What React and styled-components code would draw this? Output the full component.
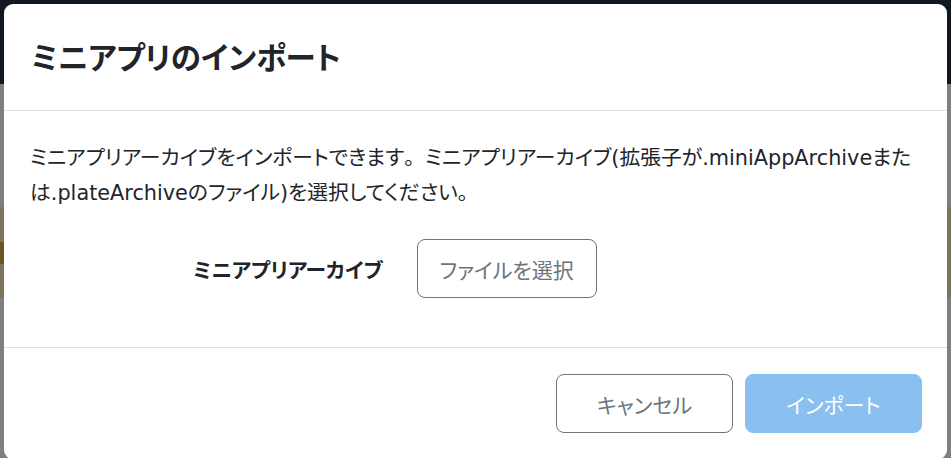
import React from "react";
import styled, { createGlobalStyle } from "styled-components";

const GlobalStyle = createGlobalStyle`
  html, body { margin: 0; padding: 0; }
  body {
    width: 951px;
    height: 458px;
    overflow: hidden;
    background: #7f7f7f;
    font-family: "DejaVu Sans", "Noto Sans CJK JP", sans-serif;
  }
`;

const Page = styled.div`
  position: relative;
  width: 951px;
  height: 458px;
  overflow: hidden;
  display: flex;
  flex-direction: column;
`;

const NavBar = styled.div`
  height: 84px;
  background: #111820;
`;

const PageBody = styled.div`
  flex: 1;
  background: #7f7f7f;
  padding-top: 123px;
`;

const Alert = styled.div`
  height: 91px;
  background: #7d7560;
  display: flex;
  align-items: center;
`;

const AlertMark = styled.div`
  width: 5px;
  height: 22px;
  background: #6b5420;
`;

const Modal = styled.div`
  position: absolute;
  left: 4px;
  top: 4px;
  width: 943px;
  height: 455px;
  background: #fff;
  border-radius: 9px;
  display: flex;
  flex-direction: column;
  color: #212529;
  font-family: "DejaVu Sans", "Noto Sans CJK JP", sans-serif;
  font-feature-settings: "palt";
`;

const Header = styled.div`
  height: 106px;
  padding: 0 27px;
  display: flex;
  align-items: center;
  border-bottom: 1px solid #dee2e6;
`;

const Title = styled.h4`
  margin: 0;
  font-family: "Noto Sans CJK JP", sans-serif;
  font-size: 30.5px;
  font-weight: 700;
  line-height: 1.2;
  padding-bottom: 2px;
`;

const Body = styled.div`
  height: 237px;
  box-sizing: border-box;
  padding: 30px 26px 0;
  border-bottom: 1px solid #dee2e6;
`;

const Description = styled.p`
  margin: 0;
  font-size: 20.8px;
  line-height: 35px;
`;

const Line = styled.span`
  display: block;
  white-space: nowrap;
`;

const Stop = styled.span`
  font-feature-settings: normal;
`;

const FieldRow = styled.div`
  margin-top: 28px;
  padding-left: 163px;
  display: flex;
  align-items: center;
  gap: 34px;
`;

const Label = styled.label`
  font-family: "Noto Sans CJK JP", sans-serif;
  font-size: 20.7px;
  font-weight: 700;
  white-space: nowrap;
`;

const Button = styled.button`
  box-sizing: border-box;
  height: 59px;
  width: ${(p) => p.$w}px;
  border-radius: 8px;
  font-family: "Noto Sans CJK JP", sans-serif;
  font-feature-settings: "palt";
  font-size: 21px;
  display: flex;
  align-items: center;
  justify-content: center;
  padding: 0;
  cursor: pointer;
  border: 1px solid ${(p) => (p.$primary ? "#8ac0f0" : "#6c757d")};
  background: ${(p) => (p.$primary ? "#8ac0f0" : "#fff")};
  color: ${(p) => (p.$primary ? "#fff" : "#6c757d")};
`;

const Footer = styled.div`
  flex: 1;
  display: flex;
  justify-content: flex-end;
  align-items: flex-start;
  gap: 12px;
  padding: 26px 25px 0;
`;

export default function App() {
  return (
    <>
      <GlobalStyle />
      <Page>
        <NavBar />
        <PageBody>
          <Alert>
            <AlertMark />
          </Alert>
        </PageBody>
        <Modal role="dialog">
          <Header>
            <Title>ミニアプリのインポート</Title>
          </Header>
          <Body>
            <Description>
              <Line>
                ミニアプリアーカイブをインポートできます<Stop>。</Stop>ミニアプリアーカイブ(拡張子が.miniAppArchiveまた
              </Line>
              <Line>
                は.plateArchiveのファイル)を選択してください<Stop>。</Stop>
              </Line>
            </Description>
            <FieldRow>
              <Label>ミニアプリアーカイブ</Label>
              <Button $w={180}>ファイルを選択</Button>
            </FieldRow>
          </Body>
          <Footer>
            <Button $w={177}>キャンセル</Button>
            <Button $w={177} $primary disabled>
              インポート
            </Button>
          </Footer>
        </Modal>
      </Page>
    </>
  );
}
